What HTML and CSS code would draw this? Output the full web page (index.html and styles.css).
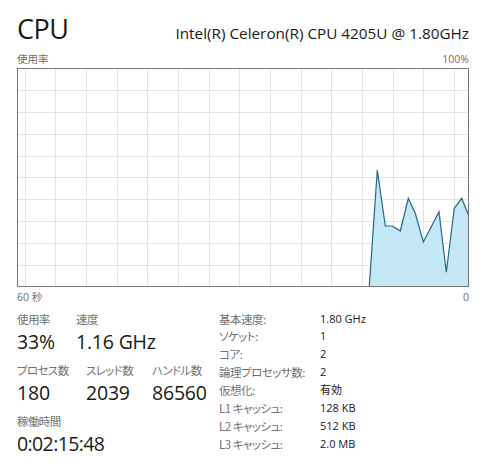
FILE: index.html
```html
<!DOCTYPE html>
<html lang="ja">
<head>
<meta charset="utf-8">
<title>CPU</title>
<link rel="stylesheet" href="styles.css">
</head>
<body>
<div class="page">
  <div class="header">
    <div class="title">CPU</div>
    <div class="model">Intel(R) Celeron(R) CPU 4205U @ 1.80GHz</div>
  </div>
  <div class="axis-row top">
    <span class="jp">使用率</span>
    <span>100%</span>
  </div>
  <svg class="chart" width="452" height="219" viewBox="0 0 452 219">
    <g class="grid">
      <line x1="8.5" y1="0" x2="8.5" y2="219"/>
      <line x1="38.5" y1="0" x2="38.5" y2="219"/>
      <line x1="69.5" y1="0" x2="69.5" y2="219"/>
      <line x1="100.5" y1="0" x2="100.5" y2="219"/>
      <line x1="130.5" y1="0" x2="130.5" y2="219"/>
      <line x1="161.5" y1="0" x2="161.5" y2="219"/>
      <line x1="192.5" y1="0" x2="192.5" y2="219"/>
      <line x1="222.5" y1="0" x2="222.5" y2="219"/>
      <line x1="253.5" y1="0" x2="253.5" y2="219"/>
      <line x1="284.5" y1="0" x2="284.5" y2="219"/>
      <line x1="314.5" y1="0" x2="314.5" y2="219"/>
      <line x1="345.5" y1="0" x2="345.5" y2="219"/>
      <line x1="376.5" y1="0" x2="376.5" y2="219"/>
      <line x1="406.5" y1="0" x2="406.5" y2="219"/>
      <line x1="437.5" y1="0" x2="437.5" y2="219"/>
      <line x1="0" y1="22.5" x2="452" y2="22.5"/>
      <line x1="0" y1="44.5" x2="452" y2="44.5"/>
      <line x1="0" y1="66.5" x2="452" y2="66.5"/>
      <line x1="0" y1="88.5" x2="452" y2="88.5"/>
      <line x1="0" y1="109.5" x2="452" y2="109.5"/>
      <line x1="0" y1="131.5" x2="452" y2="131.5"/>
      <line x1="0" y1="153.5" x2="452" y2="153.5"/>
      <line x1="0" y1="175.5" x2="452" y2="175.5"/>
      <line x1="0" y1="197.5" x2="452" y2="197.5"/>
    </g>
    <polygon class="area" points="352.3,218 360.3,102 368.3,158 375.3,158 383.3,163 391.3,130.3 398.3,145.3 406.3,174 414,159.3 422,143.7 429.3,204.3 437.3,140.3 444.7,130.3 452,147 452,218"/>
    <polyline class="line" points="352.3,218 360.3,102 368.3,158 375.3,158 383.3,163 391.3,130.3 398.3,145.3 406.3,174 414,159.3 422,143.7 429.3,204.3 437.3,140.3 444.7,130.3 451.5,147"/>
    <rect class="frame" x="0.5" y="0.5" width="451" height="218"/>
  </svg>
  <div class="axis-row bottom">
    <span>60 <span class="jp">秒</span></span>
    <span>0</span>
  </div>
  <div class="stats">
    <div class="left">
      <div class="stat-row">
        <div class="stat w59"><div class="label">使用率</div><div class="value">33%</div></div>
        <div class="stat"><div class="label">速度</div><div class="value">1.16 GHz</div></div>
      </div>
      <div class="stat-row">
        <div class="stat w69"><div class="label">プロセス数</div><div class="value">180</div></div>
        <div class="stat w66"><div class="label">スレッド数</div><div class="value">2039</div></div>
        <div class="stat"><div class="label">ハンドル数</div><div class="value">86560</div></div>
      </div>
      <div class="stat-row">
        <div class="stat"><div class="label">稼働時間</div><div class="value time">0:02:15:48</div></div>
      </div>
    </div>
    <div class="details">
      <div class="dk first">基本速度:</div><div class="dv first">1.80 GHz</div>
      <div class="dk">ソケット:</div><div class="dv">1</div>
      <div class="dk">コア:</div><div class="dv">2</div>
      <div class="dk">論理プロセッサ数:</div><div class="dv">2</div>
      <div class="dk">仮想化:</div><div class="dv">有効</div>
      <div class="dk">L1 キャッシュ:</div><div class="dv">128 KB</div>
      <div class="dk">L2 キャッシュ:</div><div class="dv">512 KB</div>
      <div class="dk">L3 キャッシュ:</div><div class="dv">2.0 MB</div>
    </div>
  </div>
</div>
</body>
</html>
```

FILE: styles.css
```css
html, body {
  margin: 0;
  padding: 0;
  background: #ffffff;
}

body {
  font-family: "Open Sans", "Noto Sans CJK JP", sans-serif;
  color: #1a1a1a;
}

.page {
  width: 493px;
  box-sizing: border-box;
  padding: 12px 24px 0 17px;
}

.header {
  display: flex;
  justify-content: space-between;
  align-items: baseline;
  height: 34px;
}

.title {
  font-size: 27px;
  line-height: 34px;
  letter-spacing: -0.5px;
}

.model {
  font-size: 15.3px;
  line-height: 20px;
  letter-spacing: 0;
}

.axis-row {
  display: flex;
  justify-content: space-between;
  font-size: 10.5px;
  line-height: 14px;
  color: #707070;
}

.axis-row .jp {
  font-family: "Noto Sans CJK JP", sans-serif;
  font-feature-settings: "palt";
}

.axis-row.top {
  margin-top: 6px;
  margin-bottom: 2px;
}

.axis-row.bottom {
  margin-top: 3px;
}

.chart {
  display: block;
}

.grid line {
  stroke: #e4e4e4;
  stroke-width: 1;
}

.area {
  fill: #c4e7f6;
}

.line {
  fill: none;
  stroke: #1f6a86;
  stroke-width: 1.2;
  stroke-linejoin: miter;
}

.frame {
  fill: none;
  stroke: #767676;
  stroke-width: 1;
}

.stats {
  display: flex;
  margin-top: 6px;
}

.left {
  width: 202px;
  display: flex;
  flex-direction: column;
  gap: 5px;
}

.stat-row {
  display: flex;
}

.w59 { width: 59px; }
.w69 { width: 69px; }
.w66 { width: 66px; }

.label {
  font-family: "Noto Sans CJK JP", sans-serif;
  font-feature-settings: "palt";
  font-size: 11.5px;
  letter-spacing: -0.6px;
  line-height: 18px;
  color: #727272;
}

.value {
  font-size: 19.5px;
  line-height: 28px;
  letter-spacing: -0.2px;
}

.value.time {
  letter-spacing: -0.6px;
}

.details {
  display: grid;
  grid-template-columns: 101px auto;
  grid-auto-rows: 18px;
  align-items: center;
  margin-top: -1px;
  font-size: 11px;
}

.details .first {
  height: 20px;
  line-height: 20px;
}

.dk {
  font-family: "Noto Sans CJK JP", sans-serif;
  font-feature-settings: "palt";
  font-size: 11.5px;
  letter-spacing: -0.5px;
  color: #727272;
  line-height: 18px;
  white-space: nowrap;
}

.dv {
  line-height: 18px;
  color: #1a1a1a;
}

.details > .first {
  align-self: start;
}
```
